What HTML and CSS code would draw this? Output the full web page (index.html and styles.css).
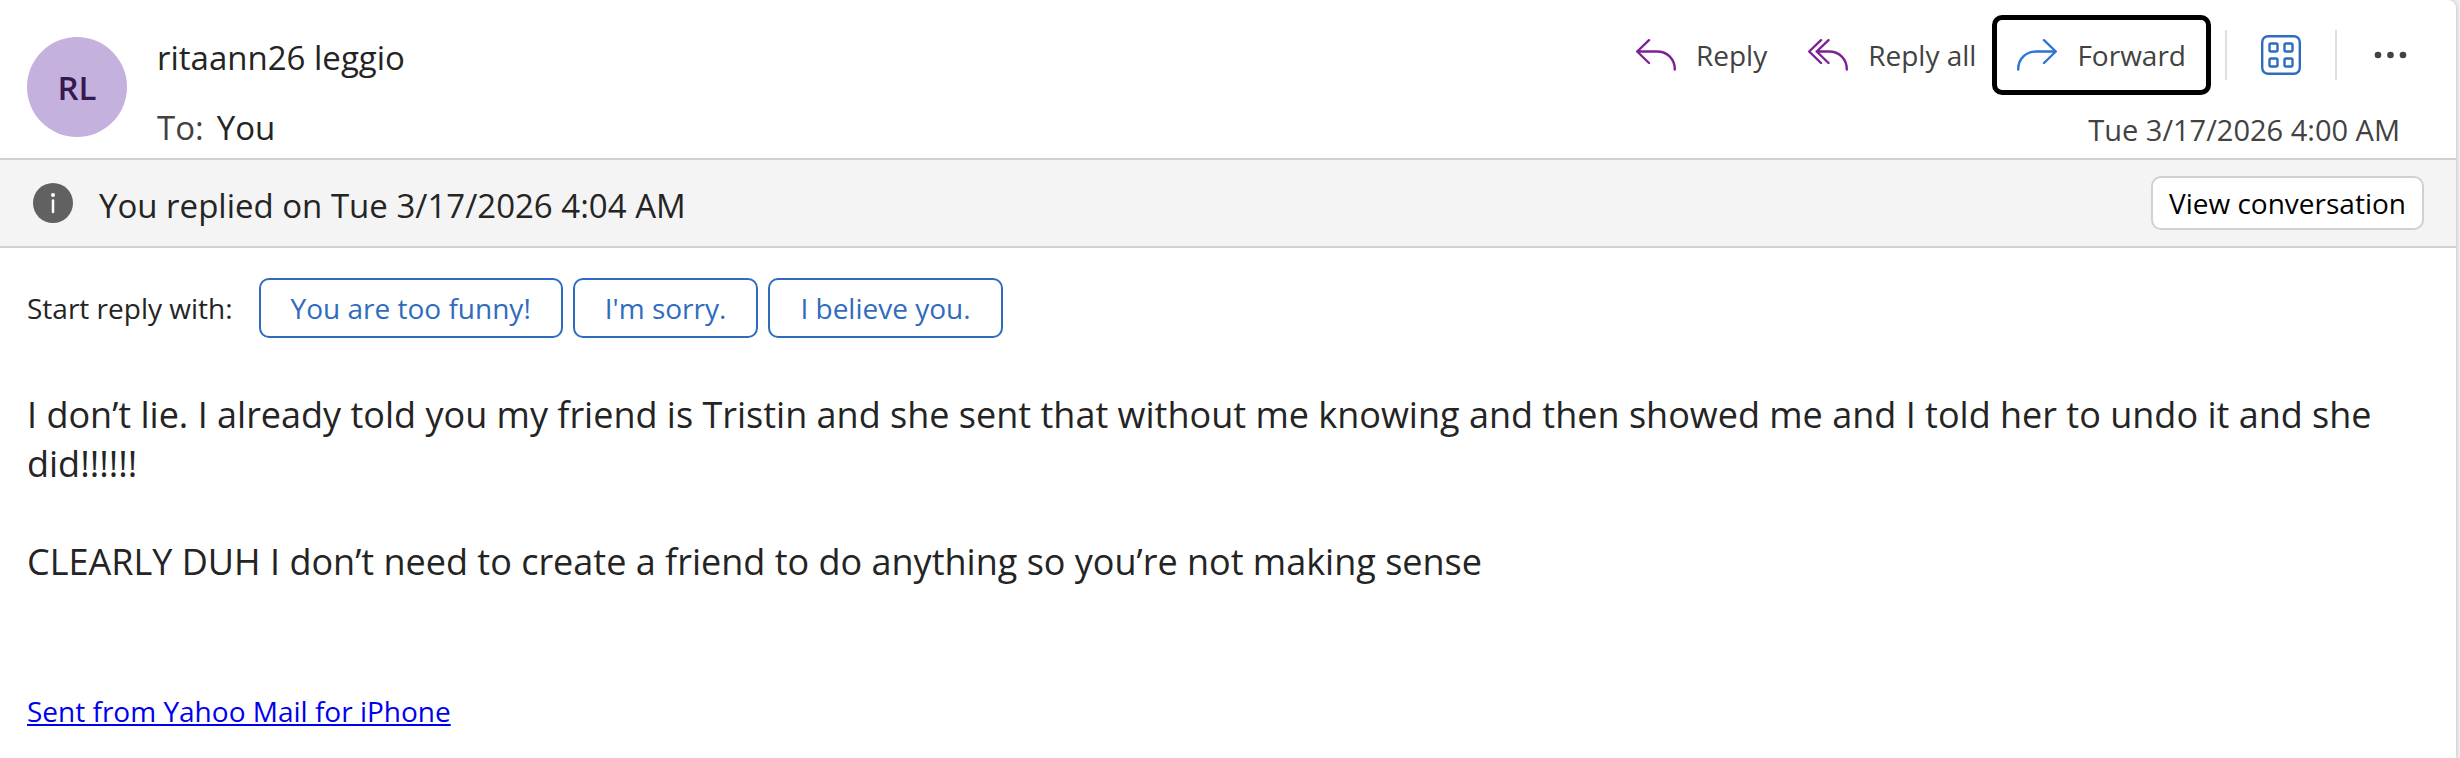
FILE: index.html
```html
<!DOCTYPE html>
<html lang="en">
<head>
    <meta charset="UTF-8">
    <meta name="viewport" content="width=device-width, initial-scale=1.0">
    <title>Mail</title>
    <link rel="stylesheet" href="styles.css">
</head>
<body>
    <article class="message">
        <header class="message-header">
            <div class="avatar">RL</div>

            <div class="people">
                <div class="sender">ritaann26 leggio</div>
                <div class="recipients"><span class="to-label">To:</span><span>You</span></div>
            </div>

            <div class="header-side">
                <div class="toolbar">
                    <button type="button" class="action">
                        <svg class="icon reply-icon" width="40" height="32" viewBox="0 0 40 32" stroke-width="2.400">
                            <path d="M13 1.200 1.200 12.500 13 24M1.200 12.500H21C31.500 12.500 38.800 20 38.800 30.500"/>
                        </svg>
                        <span>Reply</span>
                    </button>
                    <button type="button" class="action">
                        <svg class="icon reply-icon" width="40" height="32" viewBox="0 0 40 32" stroke-width="2.400">
                            <path d="M13 1.200 1.200 12.500 13 24M20.500 1.200 8.700 12.500 20.500 24M8.700 12.500H21C31.500 12.500 38.800 20 38.800 30.500"/>
                        </svg>
                        <span>Reply all</span>
                    </button>
                    <button type="button" class="action focused">
                        <svg class="icon forward-icon" width="40" height="32" viewBox="0 0 40 32" stroke-width="2.400">
                            <path d="M27 1.200 38.800 12.500 27 24M38.800 12.500H19C8.500 12.500 1.200 20 1.200 30.500"/>
                        </svg>
                        <span>Forward</span>
                    </button>
                    <span class="divider"></span>
                    <button type="button" class="action icon-only" aria-label="Apps">
                        <svg class="icon apps-icon" width="40" height="40" viewBox="0 0 40 40" stroke-width="2.400">
                            <rect x="1.200" y="1.200" width="37.600" height="37.600" rx="6"/>
                            <rect x="8.500" y="8.500" width="8" height="8" rx="1.500"/>
                            <rect x="23.500" y="8.500" width="8" height="8" rx="1.500"/>
                            <rect x="8.500" y="23.500" width="8" height="8" rx="1.500"/>
                            <rect x="23.500" y="23.500" width="8" height="8" rx="1.500"/>
                        </svg>
                    </button>
                    <span class="divider"></span>
                    <button type="button" class="action icon-only" aria-label="More actions">
                        <svg width="40" height="40" viewBox="0 0 40 40" fill="#424242">
                            <circle cx="7" cy="20" r="3.300"/>
                            <circle cx="19.500" cy="20" r="3.300"/>
                            <circle cx="32" cy="20" r="3.300"/>
                        </svg>
                    </button>
                </div>
                <time class="date" datetime="2026-03-17T04:00">Tue 3/17/2026 4:00 AM</time>
            </div>
        </header>

        <div class="info-bar">
            <svg width="40" height="40" viewBox="0 0 40 40">
                <circle cx="20" cy="20" r="20" fill="#616161"/>
                <circle cx="20" cy="12" r="2" fill="#fff"/>
                <path d="M20 17.500V29" stroke="#fff" stroke-width="2.500" stroke-linecap="round"/>
            </svg>
            <span class="info-text">You replied on Tue 3/17/2026 4:04 AM</span>
            <button type="button" class="view-btn">View conversation</button>
        </div>

        <div class="suggestions">
            <span class="suggestions-label">Start reply with:</span>
            <button type="button" class="suggestion">You are too funny!</button>
            <button type="button" class="suggestion">I'm sorry.</button>
            <button type="button" class="suggestion">I believe you.</button>
        </div>

        <div class="message-body">
            <p>I don’t lie. I already told you my friend is Tristin and she sent that without me knowing and then showed me and I told her to undo it and she did!!!!!!</p>
            <p>CLEARLY DUH I don’t need to create a friend to do anything so you’re not making sense</p>
            <a class="signature" href="#">Sent from Yahoo Mail for iPhone</a>
        </div>
    </article>
</body>
</html>
```
FILE: styles.css
```css
:root {
    --color-text: #242424;
    --color-muted: #424242;
    --color-blue: #2f6cbd;
    --color-purple: #7f2196;
    --color-line: #d1d1d1;
}

* {
    margin: 0;
    padding: 0;
    box-sizing: border-box;
}

body {
    background-color: #f0f0f0;
    color: var(--color-text);
    font-family: 'Segoe UI', 'Open Sans', sans-serif;
    font-size: 28px;
}

button {
    font: inherit;
    color: inherit;
    background: none;
    border: none;
    cursor: pointer;
    white-space: nowrap;
}

svg {
    display: block;
    flex-shrink: 0;
}

.message {
    min-height: 100vh;
    margin-right: 4px;
    background-color: #fff;
    border-radius: 0 8px 0 0;
    box-shadow: 0 0 4px rgba(0, 0, 0, 0.25);
}

/* Header */
.message-header {
    display: flex;
    align-items: flex-start;
    padding: 15px 56px 6px 27px;
    border-bottom: 2px solid var(--color-line);
}

.avatar {
    display: flex;
    align-items: center;
    justify-content: center;
    width: 100px;
    height: 100px;
    margin-top: 22px;
    border-radius: 50%;
    background-color: #c4b1dd;
    color: #341a51;
    font-size: 33px;
    font-weight: 600;
}

.people {
    display: flex;
    flex: 1;
    flex-direction: column;
    gap: 22px;
    padding: 19px 0 0 30px;
    font-size: 33px;
    line-height: 48px;
}

.recipients {
    display: flex;
    gap: 13px;
}

.to-label {
    color: var(--color-muted);
}

.header-side {
    display: flex;
    flex-direction: column;
    align-items: flex-end;
    color: var(--color-muted);
}

.toolbar {
    display: flex;
    align-items: center;
    height: 80px;
    margin-right: -11px;
}

.action {
    display: flex;
    align-items: center;
    gap: 20px;
    height: 80px;
    padding: 0 11px 0 20px;
    border: 5px solid transparent;
    border-radius: 10px;
}

.action.focused {
    padding-right: 20px;
    border-color: #000;
}

.icon-only {
    padding: 0 29px;
}

.icon-only:last-child {
    padding-right: 0;
    border-right: none;
}

.icon {
    fill: none;
    stroke-linecap: round;
    stroke-linejoin: round;
}

.reply-icon {
    stroke: var(--color-purple);
}

.forward-icon {
    stroke: #2b74d8;
}

.apps-icon {
    stroke: var(--color-blue);
}

.divider {
    width: 2px;
    height: 50px;
    background-color: #e0e0e0;
}

.focused + .divider {
    margin-left: 14px;
}

.date {
    padding-top: 16px;
    font-size: 29px;
    line-height: 38px;
}

/* Replied notice */
.info-bar {
    display: flex;
    align-items: center;
    gap: 26px;
    padding: 16px 32px 16px 33px;
    background-color: #f4f4f4;
    border-bottom: 2px solid var(--color-line);
}

.info-text {
    flex: 1;
    padding-top: 6px;
    font-size: 33px;
    line-height: 48px;
}

.view-btn {
    height: 54px;
    padding: 0 16px;
    background-color: #fff;
    border: 2px solid var(--color-line);
    border-radius: 10px;
    color: #000;
}

/* Suggested replies */
.suggestions {
    display: flex;
    align-items: center;
    gap: 10px;
    padding: 30px 27px 0;
}

.suggestions-label {
    margin-right: 16px;
}

.suggestion {
    height: 60px;
    padding: 0 30px;
    border: 2px solid var(--color-blue);
    border-radius: 10px;
    color: var(--color-blue);
}

/* Message text */
.message-body {
    padding: 52px 27px 0;
    font-size: 36px;
    line-height: 49px;
}

.message-body p {
    margin-bottom: 49px;
}

.signature {
    display: inline-block;
    margin-top: 52px;
    color: #0000ee;
    font-size: 28px;
}
```
